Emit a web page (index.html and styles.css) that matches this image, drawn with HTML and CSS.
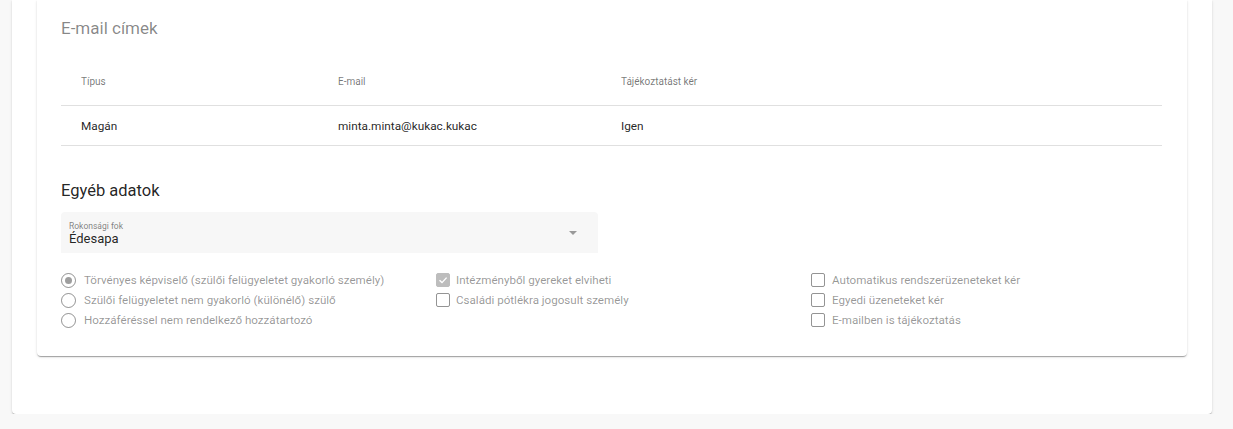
FILE: index.html
```html
<!DOCTYPE html>
<html lang="hu">
<head>
    <meta charset="UTF-8">
    <meta name="viewport" content="width=device-width, initial-scale=1.0">
    <title>Hozzátartozó adatai</title>
    <link rel="stylesheet" href="styles.css">
</head>
<body>
    <div class="outer-card">
        <div class="inner-card">
            <h3 class="section-title">E-mail címek</h3>
            <div class="email-table">
                <div class="table-row table-head">
                    <div class="cell">Típus</div>
                    <div class="cell">E-mail</div>
                    <div class="cell">Tájékoztatást kér</div>
                </div>
                <div class="table-row">
                    <div class="cell">Magán</div>
                    <div class="cell">minta.minta@kukac.kukac</div>
                    <div class="cell">Igen</div>
                </div>
            </div>

            <h3 class="sub-title">Egyéb adatok</h3>
            <div class="select-field">
                <div class="select-text">
                    <span class="select-label">Rokonsági fok</span>
                    <span class="select-value">Édesapa</span>
                </div>
                <span class="select-arrow"></span>
            </div>

            <div class="options">
                <div class="option-col">
                    <div class="option"><span class="radio checked"></span>Törvényes képviselő (szülői felügyeletet gyakorló személy)</div>
                    <div class="option"><span class="radio"></span>Szülői felügyeletet nem gyakorló (különélő) szülő</div>
                    <div class="option"><span class="radio"></span>Hozzáféréssel nem rendelkező hozzátartozó</div>
                </div>
                <div class="option-col">
                    <div class="option check-option"><span class="checkbox checked"><svg viewBox="0 0 12 12" width="12" height="12"><path d="M2.5 6.2 L5 8.6 L9.6 3.6" fill="none" stroke="#fff" stroke-width="1.4"/></svg></span>Intézményből gyereket elviheti</div>
                    <div class="option check-option"><span class="checkbox"></span>Családi pótlékra jogosult személy</div>
                </div>
                <div class="option-col">
                    <div class="option check-option wide"><span class="checkbox"></span>Automatikus rendszerüzeneteket kér</div>
                    <div class="option check-option wide"><span class="checkbox"></span>Egyedi üzeneteket kér</div>
                    <div class="option check-option wide"><span class="checkbox"></span>E-mailben is tájékoztatás</div>
                </div>
            </div>
        </div>
    </div>
</body>
</html>
```

FILE: styles.css
```css
body {
    margin: 0;
    background: #f8f8f8;
    font-family: Roboto, "Noto Sans", sans-serif;
    color: rgba(0, 0, 0, 0.87);
}

.outer-card {
    display: flow-root;
    margin-left: 12px;
    width: 1200px;
    box-sizing: border-box;
    padding: 0 25px 58px;
    background: #fff;
    border-radius: 0 0 4px 4px;
    box-shadow: 0 2px 1px -1px rgba(0, 0, 0, 0.2), 0 1px 1px 0 rgba(0, 0, 0, 0.14), 0 1px 3px 0 rgba(0, 0, 0, 0.12);
}

.inner-card {
    display: flow-root;
    padding: 0 25px 26px 24px;
    background: #fff;
    border-radius: 0 0 4px 4px;
    box-shadow: 0 2px 1px -1px rgba(0, 0, 0, 0.2), 0 1px 1px 0 rgba(0, 0, 0, 0.14), 0 1px 3px 0 rgba(0, 0, 0, 0.12);
}

.section-title {
    margin: 16px 0 0;
    font-size: 17px;
    line-height: 24px;
    font-weight: 400;
    color: rgba(0, 0, 0, 0.48);
}

.email-table {
    margin-top: 17px;
}

.table-row {
    display: grid;
    grid-template-columns: 257px 283px 1fr;
    align-items: center;
    height: 39px;
    border-bottom: 1px solid #e0e0e0;
    font-size: 11.8px;
}

.table-head {
    height: 48px;
    font-size: 10px;
    color: rgba(0, 0, 0, 0.54);
}

.cell {
    padding-left: 20px;
}

.sub-title {
    margin: 33px 0 0;
    font-size: 16.5px;
    line-height: 24px;
    font-weight: 400;
    color: rgba(0, 0, 0, 0.87);
}

.select-field {
    margin-top: 9px;
    width: 537px;
    height: 41px;
    box-sizing: border-box;
    padding: 0 21px 0 8px;
    display: flex;
    align-items: center;
    justify-content: space-between;
    background: #f7f7f7;
    border-radius: 4px 4px 0 0;
}

.select-text {
    display: flex;
    flex-direction: column;
    padding-top: 2px;
}

.select-label {
    font-size: 8.5px;
    line-height: 10px;
    color: rgba(0, 0, 0, 0.5);
}

.select-value {
    font-size: 13px;
    line-height: 16px;
}

.select-arrow {
    width: 0;
    height: 0;
    border-left: 4px solid transparent;
    border-right: 4px solid transparent;
    border-top: 4px solid rgba(0, 0, 0, 0.38);
    margin-top: 1px;
}

.options {
    margin-top: 17px;
    display: grid;
    grid-template-columns: 375px 375px 1fr;
}

.option {
    display: flex;
    align-items: center;
    height: 20px;
    font-size: 11.6px;
    color: rgba(0, 0, 0, 0.42);
    white-space: nowrap;
}

.radio {
    width: 13px;
    height: 13px;
    border: 1px solid rgba(0, 0, 0, 0.42);
    border-radius: 50%;
    margin-right: 8px;
    display: flex;
    align-items: center;
    justify-content: center;
}

.radio.checked::after {
    content: "";
    width: 7px;
    height: 7px;
    border-radius: 50%;
    background: rgba(0, 0, 0, 0.38);
}

.checkbox {
    width: 12px;
    height: 12px;
    border: 1px solid rgba(0, 0, 0, 0.42);
    border-radius: 2px;
    margin-right: 6px;
    display: flex;
    align-items: center;
    justify-content: center;
}

.checkbox.checked {
    background: #bdbdbd;
    border-color: #bdbdbd;
}

.check-option.wide .checkbox {
    margin-right: 7px;
}
```
